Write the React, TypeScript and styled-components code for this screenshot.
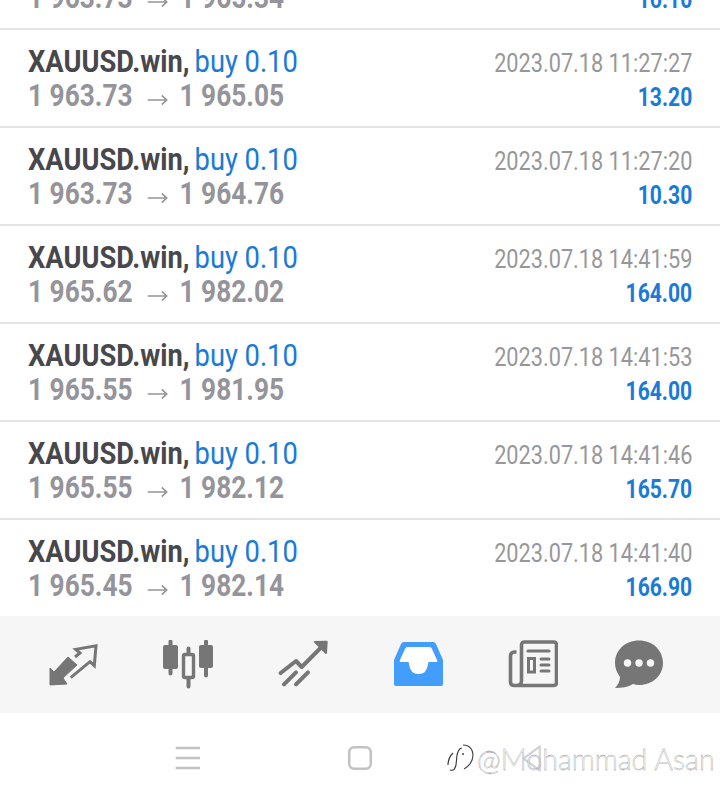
import { createGlobalStyle } from "styled-components";
import styled from "styled-components";

const GlobalStyle = createGlobalStyle`
    html, body {
        margin: 0;
        padding: 0;
        background: #ffffff;
    }
    body {
        font-family: Roboto, "Liberation Sans", sans-serif;
    }
`;

const Screen = styled.div`
    width: 720px;
    height: 802px;
    display: flex;
    flex-direction: column;
    overflow: hidden;
    position: relative;
    background: #ffffff;
`;
const List = styled.div`
    height: 616px;
    overflow: hidden;
    flex-shrink: 0;
`;
const Row = styled.div<{ $cut?: boolean }>`
    height: 96px;
    margin-top: ${(props) => (props.$cut ? "-68px" : "0")};
    padding: 0 28px;
    display: flex;
    justify-content: space-between;
    border-bottom: 2px solid #e3e3e3;
`;
const Left = styled.div`
    display: flex;
    flex-direction: column;
    padding-top: 15px;
`;
const Right = styled.div`
    display: flex;
    flex-direction: column;
    align-items: flex-end;
    padding-top: 18px;
`;
const Title = styled.div`
    height: 34px;
    line-height: 34px;
    font-size: 31px;
    white-space: nowrap;
    transform: scaleX(0.88);
    transform-origin: left center;
`;
const Symbol = styled.span`
    font-weight: 700;
    color: #47474c;
`;
const Side = styled.span`
    color: #1a7ad8;
    margin-left: -2px;
`;
const Prices = styled.div`
    height: 34px;
    line-height: 34px;
    font-size: 31px;
    font-weight: 700;
    color: #94949a;
    white-space: nowrap;
    transform: scaleX(0.847);
    transform-origin: left center;
`;
const Arrow = styled.svg`
    width: 24px;
    height: 12px;
    margin: 0 6px 0 10px;
    vertical-align: 0px;
`;
const Time = styled.div`
    height: 30px;
    line-height: 30px;
    font-size: 26px;
    color: #97979b;
    white-space: nowrap;
    transform: scaleX(0.835);
    transform-origin: right center;
`;
const Profit = styled.div`
    height: 38px;
    line-height: 38px;
    font-size: 26px;
    font-weight: 700;
    color: #1a7ad8;
    transform: scaleX(0.81);
    transform-origin: right center;
`;
const TabBar = styled.div`
    height: 97px;
    flex-shrink: 0;
    background: #f6f6f6;
    display: flex;
    align-items: center;
    gap: 65px;
    padding-left: 48px;
`;
const TabIcon = styled.svg<{ $shift?: number }>`
    width: 50px;
    height: 50px;
    margin-left: ${(props) => props.$shift ?? 0}px;
    flex-shrink: 0;
`;
const NavBar = styled.div`
    flex: 1;
    display: flex;
    align-items: center;
    gap: 147px;
    padding-left: 175px;
    padding-top: 1px;
`;
const NavIcon = styled.svg`
    width: 26px;
    height: 28px;
    flex-shrink: 0;
`;
const Watermark = styled.div`
    position: absolute;
    left: 447px;
    top: 742px;
    display: flex;
    align-items: center;
    gap: 3px;
`;
const WatermarkText = styled.span`
    font-family: Lato, sans-serif;
    font-size: 28.6px;
    font-weight: 300;
    color: rgba(255, 255, 255, 0.5);
    -webkit-text-stroke: 0.3px #777777;
    white-space: nowrap;
    display: inline-block;
`;

interface ITrade {
    open: string;
    close: string;
    time: string;
    profit: string;
}

const trades: ITrade[] = [
    { open: "1 963.73", close: "1 965.34", time: "2023.07.18 11:27:33", profit: "16.10" },
    { open: "1 963.73", close: "1 965.05", time: "2023.07.18 11:27:27", profit: "13.20" },
    { open: "1 963.73", close: "1 964.76", time: "2023.07.18 11:27:20", profit: "10.30" },
    { open: "1 965.62", close: "1 982.02", time: "2023.07.18 14:41:59", profit: "164.00" },
    { open: "1 965.55", close: "1 981.95", time: "2023.07.18 14:41:53", profit: "164.00" },
    { open: "1 965.55", close: "1 982.12", time: "2023.07.18 14:41:46", profit: "165.70" },
    { open: "1 965.45", close: "1 982.14", time: "2023.07.18 14:41:40", profit: "166.90" },
];

function App() {
    return (
        <Screen>
            <GlobalStyle />
            <List>
                {trades.map((trade, i) => (
                    <Row key={trade.time} $cut={i === 0}>
                        <Left>
                            <Title>
                                <Symbol>XAUUSD.win,</Symbol> <Side>buy 0.10</Side>
                            </Title>
                            <Prices>
                                {trade.open}{" "}
                                <Arrow viewBox="0 0 24 12">
                                    <path d="M0 6 H23 M17 1.5 L23 6 L17 10.5" fill="none" stroke="#94949a" strokeWidth="1.7" />
                                </Arrow>{" "}
                                {trade.close}
                            </Prices>
                        </Left>
                        <Right>
                            <Time>{trade.time}</Time>
                            <Profit>{trade.profit}</Profit>
                        </Right>
                    </Row>
                ))}
            </List>
            <TabBar>
                <TabIcon viewBox="0 0 50 50">
                    <path d="M2 45 L2 28 L6 32 L20 17 L29 25 L15 38 L19 44 Z" fill="#767676" stroke="#767676" strokeWidth="1" strokeLinejoin="round" />
                    <path d="M27 17 L32 13 L27.7 9.3 L48 5.7 L46.3 25.7 L42 21.7 L22.7 37.7" fill="none" stroke="#767676" strokeWidth="3" />
                </TabIcon>
                <TabIcon viewBox="0 0 50 50">
                    <path d="M7.5 1.5 V33.5 M43 1.5 V35.5 M25.5 8.5 V46.5" stroke="#767676" strokeWidth="4" strokeLinecap="round" />
                    <rect x="0" y="5" width="15" height="24" rx="2" fill="#767676" />
                    <rect x="36" y="5" width="14" height="23" rx="2" fill="#767676" />
                    <rect x="20.5" y="14.5" width="10" height="23" rx="1.5" fill="#f6f6f6" stroke="#767676" strokeWidth="3.4" />
                </TabIcon>
                <TabIcon viewBox="0 0 50 50">
                    <path d="M2.7 33 L18 21 L23.7 27 L44 6.5" fill="none" stroke="#767676" strokeWidth="4" strokeLinecap="round" strokeLinejoin="round" />
                    <path d="M37 2 L48.7 1.7 L48 13 Z" fill="#767676" stroke="#767676" strokeWidth="2" strokeLinejoin="round" />
                    <path d="M6 44.3 L18 32.3 M18 44.3 L30 32.3" fill="none" stroke="#767676" strokeWidth="4" strokeLinecap="round" />
                </TabIcon>
                <TabIcon viewBox="0 0 50 50">
                    <path d="M11 2 H40 Q42 2 43 4 L50 20 V44 Q50 46 48 46 H3 Q1 46 1 44 V20 L8 4 Q9 2 11 2 Z" fill="#429dfd" />
                    <path d="M14 7 H37 Q38 7 39 9 L44 20 Q45 22 43 22 H36 Q35 22 35 24 Q34 34 25.5 34 Q17 34 16 24 Q16 22 15 22 H8 Q6 22 7 20 L12 9 Q13 7 14 7 Z" fill="#ffffff" />
                </TabIcon>
                <TabIcon viewBox="0 0 50 50">
                    <path d="M8 12 H6 Q2 12 2 16 V42 Q2 45.5 6 45.5 H45 Q48 45.5 48 42.5 V5 Q48 2 45 2 H16 Q13 2 13 5 V41 Q13 45.5 8 45.5" fill="none" stroke="#767676" strokeWidth="3.6" transform="translate(0.5 0)" />
                    <path d="M20 11 H41" stroke="#767676" strokeWidth="3.2" strokeLinecap="round" />
                    <rect x="20.5" y="18.5" width="6" height="13.5" fill="none" stroke="#767676" strokeWidth="3" />
                    <path d="M33 19 H41 M33 25 H41 M33 31 H41" stroke="#767676" strokeWidth="3" strokeLinecap="round" />
                </TabIcon>
                <TabIcon $shift={-9} viewBox="0 0 50 50">
                    <path d="M25 0.5 C39 0.5 49 10.5 49 23 C49 35 39 45 25 45 C23 45 21 44.5 19 44 C14 47 8 48 1 48 C4 45 6 41 6 37 C3 33 1 28 1 23 C1 10.5 11 0.5 25 0.5 Z" fill="#767676" />
                    <circle cx="13.5" cy="23" r="3.7" fill="#f6f6f6" />
                    <circle cx="25" cy="23" r="3.7" fill="#f6f6f6" />
                    <circle cx="36.5" cy="23" r="3.7" fill="#f6f6f6" />
                </TabIcon>
            </TabBar>
            <NavBar>
                <NavIcon viewBox="0 0 26 28">
                    <path d="M0.7 4 H25 M0.7 14 H25 M0.7 24 H25" stroke="#c2c2c2" strokeWidth="2.4" />
                </NavIcon>
                <NavIcon viewBox="0 0 26 28">
                    <rect x="1.25" y="3.25" width="21.5" height="21.5" rx="5" fill="none" stroke="#c2c2c2" strokeWidth="2.5" />
                </NavIcon>
                <NavIcon viewBox="0 0 26 28">
                    <path d="M18.8 2.5 V26.5 L2.5 14.5 Z" fill="none" stroke="#d4d4d4" strokeWidth="2.2" strokeLinejoin="round" />
                </NavIcon>
            </NavBar>
            <Watermark>
                <svg width="27" height="32" viewBox="0 0 27 32">
                    <path d="M16 2 C23 2 26 7 26 12 C26 19 21 24 17 26" fill="none" stroke="#444444" strokeWidth="1.1" />
                    <path d="M15 5 C12 5 11 8 10 12 L9 22 C8 26 7 28 3 27 M1 22 C1 17 3 13 6 10" fill="none" stroke="#333333" strokeWidth="1.1" />
                    <circle cx="16" cy="11" r="1" fill="#444444" />
                </svg>
                <WatermarkText>@Mohammad Asan</WatermarkText>
            </Watermark>
        </Screen>
    );
}
export default App;
